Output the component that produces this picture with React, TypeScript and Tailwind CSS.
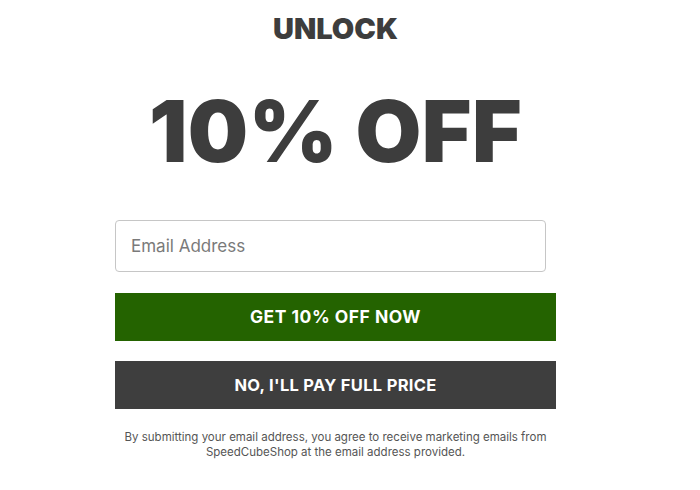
export default function App() {
  return (
    <div className="w-[700px] h-[490px] bg-white overflow-hidden" style={{ fontFamily: 'Inter, "Open Sans", sans-serif' }}>
      <div className="ml-[115px] w-[441px] flex flex-col items-center">
        {/* Headline */}
        <h2 className="mt-[12px] text-[29px] leading-[34px] font-black text-[#3d3d3d]">UNLOCK</h2>
        <h1 className="mt-[36px] text-[85px] leading-[100px] font-black tracking-[0.5px] text-[#3d3d3d] whitespace-nowrap">10% OFF</h1>

        {/* Form */}
        <div className="mt-[38px] w-full flex flex-col">
          <input
            type="email"
            placeholder="Email Address"
            className="w-[431px] h-[52px] px-[15px] border border-[#c6c6c6] rounded-[4px] text-[17px] text-[#3d3d3d] placeholder:text-[#7a7a7a] outline-none"
          />
          <button className="mt-[21px] h-[48px] w-full bg-[#246300] text-white text-[17.5px] font-bold tracking-[0.5px]">
            GET 10% OFF NOW
          </button>
          <button className="mt-[20px] h-[48px] w-full bg-[#3e3e3e] text-white text-[16.5px] font-bold tracking-[0.3px]">
            NO, I'LL PAY FULL PRICE
          </button>
          <p className="mt-[21px] text-center text-[11.5px] leading-[15px] text-[#555555]">
            By submitting your email address, you agree to receive marketing emails from
            <br />
            SpeedCubeShop at the email address provided.
          </p>
        </div>
      </div>
    </div>
  );
}
